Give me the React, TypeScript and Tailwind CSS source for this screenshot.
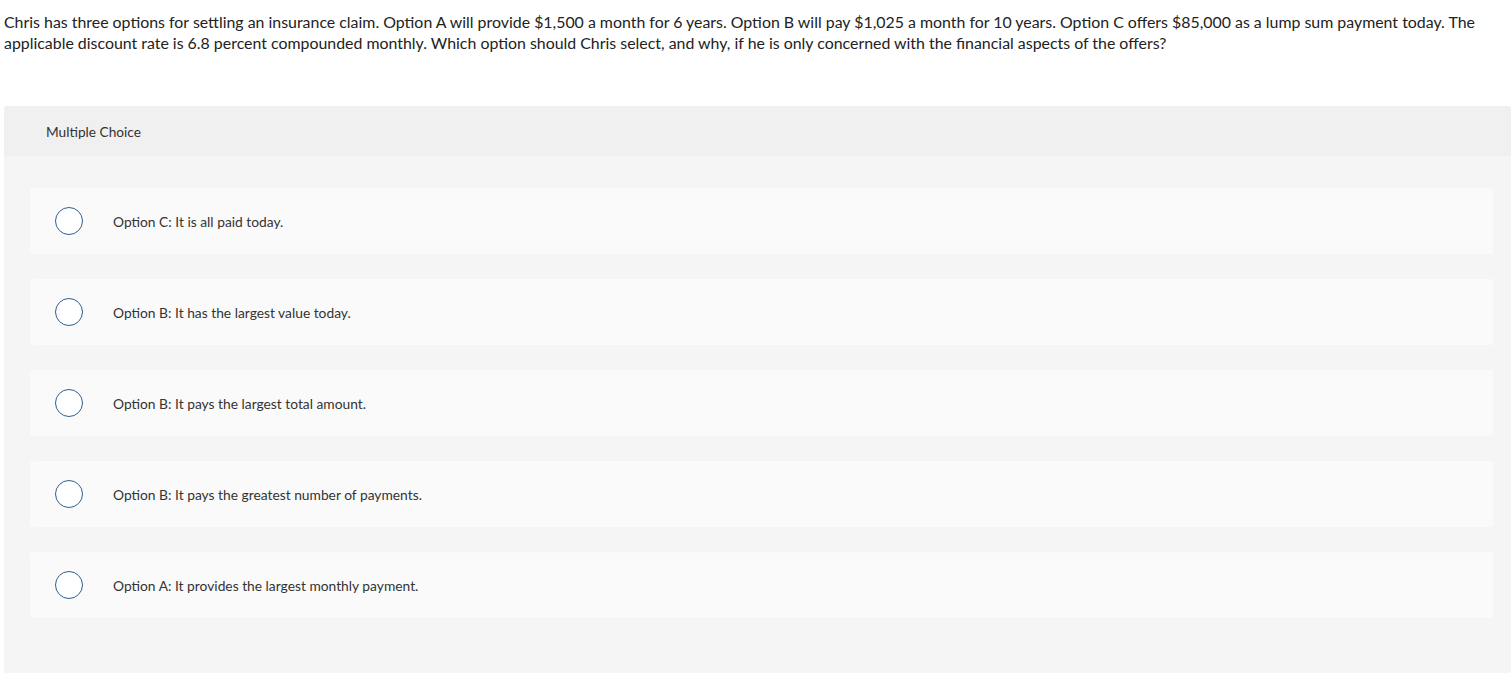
const options = [
  "Option C: It is all paid today.",
  "Option B: It has the largest value today.",
  "Option B: It pays the largest total amount.",
  "Option B: It pays the greatest number of payments.",
  "Option A: It provides the largest monthly payment.",
];

export default function App() {
  return (
    <div className="min-h-screen overflow-hidden bg-white font-['Lato',sans-serif] text-[#222]">
      {/* question */}
      <p className="whitespace-nowrap pl-[4px] pt-[11px] text-[15.9px] leading-[21px]">
        Chris has three options for settling an insurance claim. Option A will provide $1,500 a month for 6 years. Option B will pay
        $1,025 a month for 10 years. Option C offers $85,000 as a lump sum payment today. The
        <br />
        applicable discount rate is 6.8 percent compounded monthly. Which option should Chris select, and why, if he is only
        concerned with the financial aspects of the offers?
      </p>

      {/* multiple choice panel */}
      <div className="ml-[4px] mt-[53px] rounded-[3px] bg-[#f5f5f5]">
        <div className="flex h-[50px] items-center rounded-t-[3px] bg-[#f0f0f0] pl-[42px] pt-[2px] text-[13.7px] text-[#333]">
          Multiple Choice
        </div>
        <div className="flex flex-col gap-[25px] pl-[26px] pr-[18px] pt-[32px] pb-[55px]">
          {options.map((opt, i) => (
            <div key={i} className="flex h-[66px] items-center rounded-[3px] bg-[#fafafa] pl-[25px]">
              <span className="h-[28px] w-[28px] shrink-0 rounded-full border-[1.5px] border-[#2f5f8f] bg-white" />
              <span className="ml-[30px] pt-[2px] text-[13.8px] text-[#333]">{opt}</span>
            </div>
          ))}
        </div>
      </div>
    </div>
  );
}
